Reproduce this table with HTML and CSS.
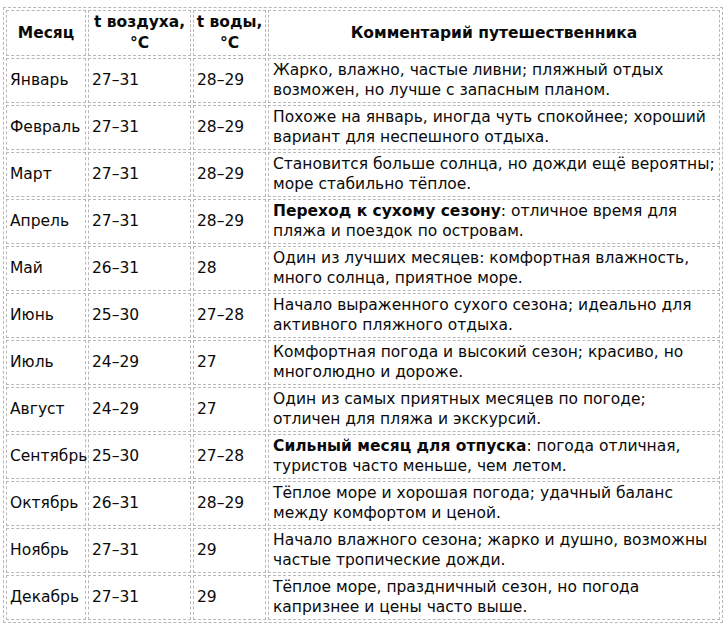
FILE: index.html
```html
<!DOCTYPE html>
<html lang="ru">
<head>
<meta charset="utf-8">
<title>Погода по месяцам</title>
<link rel="stylesheet" href="styles.css">
</head>
<body>
<table class="climate">
  <colgroup>
    <col class="c-month">
    <col class="c-air">
    <col class="c-water">
    <col class="c-note">
  </colgroup>
  <thead>
    <tr>
      <th>Месяц</th>
      <th>t воздуха,<br>°C</th>
      <th>t воды,<br>°C</th>
      <th>Комментарий путешественника</th>
    </tr>
  </thead>
  <tbody>
    <tr><td>Январь</td><td>27–31</td><td>28–29</td><td class="note">Жарко, влажно, частые ливни; пляжный отдых<br>возможен, но лучше с запасным планом.</td></tr>
    <tr><td>Февраль</td><td>27–31</td><td>28–29</td><td class="note">Похоже на январь, иногда чуть спокойнее; хороший<br>вариант для неспешного отдыха.</td></tr>
    <tr><td>Март</td><td>27–31</td><td>28–29</td><td class="note">Становится больше солнца, но дожди ещё вероятны;<br>море стабильно тёплое.</td></tr>
    <tr><td>Апрель</td><td>27–31</td><td>28–29</td><td class="note"><strong>Переход к сухому сезону</strong>: отличное время для<br>пляжа и поездок по островам.</td></tr>
    <tr><td>Май</td><td>26–31</td><td>28</td><td class="note">Один из лучших месяцев: комфортная влажность,<br>много солнца, приятное море.</td></tr>
    <tr><td>Июнь</td><td>25–30</td><td>27–28</td><td class="note">Начало выраженного сухого сезона; идеально для<br>активного пляжного отдыха.</td></tr>
    <tr><td>Июль</td><td>24–29</td><td>27</td><td class="note">Комфортная погода и высокий сезон; красиво, но<br>многолюдно и дороже.</td></tr>
    <tr><td>Август</td><td>24–29</td><td>27</td><td class="note">Один из самых приятных месяцев по погоде;<br>отличен для пляжа и экскурсий.</td></tr>
    <tr><td>Сентябрь</td><td>25–30</td><td>27–28</td><td class="note"><strong>Сильный месяц для отпуска</strong>: погода отличная,<br>туристов часто меньше, чем летом.</td></tr>
    <tr><td>Октябрь</td><td>26–31</td><td>28–29</td><td class="note">Тёплое море и хорошая погода; удачный баланс<br>между комфортом и ценой.</td></tr>
    <tr><td>Ноябрь</td><td>27–31</td><td>29</td><td class="note">Начало влажного сезона; жарко и душно, возможны<br>частые тропические дожди.</td></tr>
    <tr><td>Декабрь</td><td>27–31</td><td>29</td><td class="note">Тёплое море, праздничный сезон, но погода<br>капризнее и цены часто выше.</td></tr>
  </tbody>
</table>
</body>
</html>
```
FILE: styles.css
```css
html, body {
  margin: 0;
  padding: 0;
  background: #ffffff;
}

body {
  padding: 7px 0 0 3px;
  font-family: "DejaVu Sans", Verdana, sans-serif;
  font-size: 15.5px;
  color: #0a0a0a;
}

.climate {
  width: 720px;
  table-layout: fixed;
  border-collapse: separate;
  border-spacing: 2px;
  border: 1px dashed #b8b8b8;
}

.c-month { width: 80px; }
.c-air { width: 103px; }
.c-water { width: 73px; }
.c-note { width: auto; }

.climate th,
.climate td {
  border: 1px dashed #b8b8b8;
  padding: 1px 3px 2px;
  line-height: 20px;
  vertical-align: middle;
  text-align: left;
  white-space: nowrap;
}

.climate th {
  font-weight: bold;
  text-align: center;
  line-height: 21px;
  padding: 1px 2px 1px;
}

.climate td.note {
  padding-left: 4px;
}

.climate strong {
  font-weight: bold;
}
```
